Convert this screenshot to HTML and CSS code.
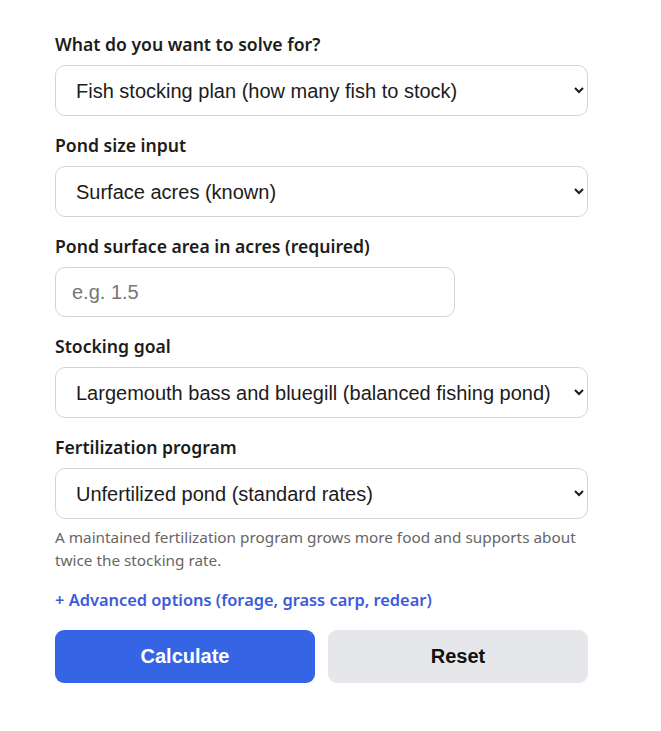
FILE: index.html
```html
<!DOCTYPE html>
<html lang="en">
<head>
    <meta charset="UTF-8">
    <meta name="viewport" content="width=device-width, initial-scale=1.0">
    <title>Pond Stocking Calculator</title>
    <link rel="stylesheet" href="styles.css">
</head>
<body>
    <!-- Stocking form -->
    <form class="calc-form">
        <div class="field">
            <label for="solve-for">What do you want to solve for?</label>
            <select id="solve-for">
                <option>Fish stocking plan (how many fish to stock)</option>
            </select>
        </div>

        <div class="field">
            <label for="size-input">Pond size input</label>
            <select id="size-input">
                <option>Surface acres (known)</option>
            </select>
        </div>

        <div class="field">
            <label for="acres">Pond surface area in acres (required)</label>
            <input type="text" id="acres" class="short-input" placeholder="e.g. 1.5">
        </div>

        <div class="field">
            <label for="goal">Stocking goal</label>
            <select id="goal">
                <option>Largemouth bass and bluegill (balanced fishing pond)</option>
            </select>
        </div>

        <div class="field">
            <label for="fert">Fertilization program</label>
            <select id="fert">
                <option>Unfertilized pond (standard rates)</option>
            </select>
            <p class="help">A maintained fertilization program grows more food and supports about twice the stocking rate.</p>
        </div>

        <a href="#" class="advanced-link">+ Advanced options (forage, grass carp, redear)</a>

        <div class="actions">
            <button type="button" class="btn btn-primary">Calculate</button>
            <button type="reset" class="btn btn-secondary">Reset</button>
        </div>
    </form>
</body>
</html>
```

FILE: styles.css
```css
body {
    margin: 0;
    padding: 0;
    background-color: #fff;
    font-family: "Noto Sans", "Open Sans", sans-serif;
    color: #1c1c1c;
}

.calc-form {
    width: 533px;
    padding: 31px 55px 40px;
}

.field {
    display: flex;
    flex-direction: column;
    margin-bottom: 16px;
}

.field label {
    font-size: 17.6px;
    font-weight: 600;
    line-height: 26px;
    margin-bottom: 8px;
}

.field select,
.field input {
    box-sizing: border-box;
    height: 51px;
    padding: 0 16px;
    border: 1px solid #d1d5db;
    border-radius: 10px;
    background-color: #fff;
    font-family: "Liberation Sans", Arial, sans-serif;
    font-size: 20px;
    color: #1c1c1c;
}

.field .short-input {
    width: 400px;
    height: 50px;
}

.field input::placeholder {
    color: #777;
}

.help {
    margin: 7px 0 0;
    font-size: 15.3px;
    line-height: 23px;
    color: #666;
}

.advanced-link {
    display: block;
    margin-top: 7px;
    font-size: 16.4px;
    font-weight: 600;
    color: #3b5bdb;
    text-decoration: none;
}

.actions {
    display: flex;
    gap: 13px;
    margin-top: 19px;
}

.btn {
    flex: 1;
    height: 53px;
    border: none;
    border-radius: 9px;
    font-family: "Liberation Sans", Arial, sans-serif;
    font-size: 20px;
    font-weight: 700;
    cursor: pointer;
}

.btn-primary {
    background-color: #3565e5;
    color: #fff;
}

.btn-secondary {
    background-color: #e5e7eb;
    color: #111;
}
```
